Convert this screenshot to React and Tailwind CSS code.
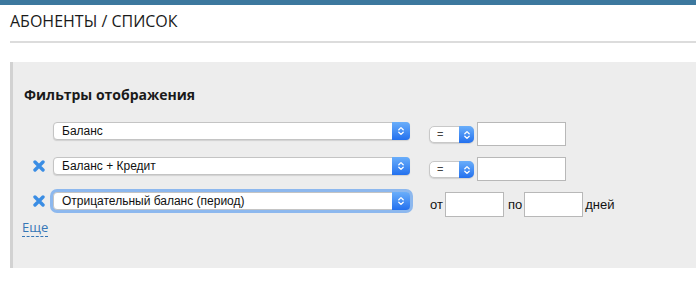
import React from "react";

function Chevrons() {
  return (
    <svg width="8" height="12" viewBox="0 0 8 12" fill="none">
      <path d="M1.8 4.8 L4 2.6 L6.2 4.8" stroke="white" strokeWidth="1.3" strokeLinecap="round" strokeLinejoin="round" />
      <path d="M1.8 7.2 L4 9.4 L6.2 7.2" stroke="white" strokeWidth="1.3" strokeLinecap="round" strokeLinejoin="round" />
    </svg>
  );
}

function BigSelect({ label, focused }) {
  return (
    <div
      className={
        "flex h-[18px] w-[357px] items-stretch rounded-[4px] border border-[#c4c4c4] bg-white shadow-[0_1px_1px_rgba(0,0,0,0.12)] " +
        (focused ? "ring-[3px] ring-[#8db8ee]" : "")
      }
    >
      <div className="flex flex-1 items-center pl-[8px] text-[12px] leading-none text-[#111] [font-family:'Liberation_Sans',Arial,sans-serif]">
        {label}
      </div>
      <div className="-my-px -mr-px flex w-[18px] items-center justify-center rounded-r-[4px] bg-gradient-to-b from-[#6aaefa] to-[#2370ee]">
        <Chevrons />
      </div>
    </div>
  );
}

function SmallSelect() {
  return (
    <div className="mt-[4px] flex h-[17px] w-[45px] items-stretch rounded-[5px] border border-[#c8c8c8] bg-white shadow-[0_1px_1px_rgba(0,0,0,0.12)]">
      <div className="flex flex-1 items-center pl-[7px] text-[11px] leading-none text-[#444] [font-family:'Liberation_Sans',Arial,sans-serif]">
        =
      </div>
      <div className="-my-px -mr-px flex w-[15px] items-center justify-center rounded-r-[5px] bg-gradient-to-b from-[#6aaefa] to-[#2370ee]">
        <Chevrons />
      </div>
    </div>
  );
}

function XIcon() {
  return (
    <svg width="12" height="12" viewBox="0 0 12 12" className="mt-[3px]">
      <path d="M2 2 L10 10 M10 2 L2 10" stroke="#3a8de4" strokeWidth="3.4" strokeLinecap="round" />
    </svg>
  );
}

export default function App() {
  return (
    <div className="min-h-[282px] bg-white [font-family:'Open_Sans',sans-serif]">
      <div className="h-[5px] bg-[#3c789e]" />
      <div className="pl-[10px]">
        <div className="mt-[4px] text-[16px] leading-[24px] text-[#1a1a1a]">АБОНЕНТЫ / СПИСОК</div>
        <div className="mt-[8px] h-[2px] bg-[#dcdcdc]" />
        <div className="mt-[19px] h-[206px] border-l-[3px] border-[#d2d2d2] bg-[#ededed] pt-[23px] pl-[11px]">
          <div className="text-[14px] font-bold leading-[20px] text-[#1a1a1a]">Фильтры отображения</div>
          <div className="mt-[17px] flex flex-col gap-[11px] pl-[9px]">
            <div className="flex h-[24px] items-start">
              <div className="w-[12px]" />
              <div className="ml-[8px]">
                <BigSelect label="Баланс" />
              </div>
              <div className="ml-[19px]">
                <SmallSelect />
              </div>
              <div className="ml-[3px] h-[24px] w-[89px] border border-[#b8b8b8] bg-white" />
            </div>
            <div className="flex h-[24px] items-start">
              <XIcon />
              <div className="ml-[8px]">
                <BigSelect label="Баланс + Кредит" />
              </div>
              <div className="ml-[19px]">
                <SmallSelect />
              </div>
              <div className="ml-[3px] h-[24px] w-[89px] border border-[#b8b8b8] bg-white" />
            </div>
            <div className="flex h-[25px] items-start">
              <XIcon />
              <div className="ml-[8px]">
                <BigSelect label="Отрицательный баланс (период)" focused />
              </div>
              <div className="ml-[20px] flex h-[25px] items-center text-[13px] text-[#111] [font-family:'Liberation_Sans',Arial,sans-serif]">
                <span>от</span>
                <div className="ml-[2px] h-[25px] w-[59px] border border-[#b8b8b8] bg-white" />
                <span className="ml-[4px]">по</span>
                <div className="ml-[2px] h-[25px] w-[59px] border border-[#b8b8b8] bg-white" />
                <span className="ml-[2px]">дней</span>
              </div>
            </div>
          </div>
          <div className="mt-[1px] text-[13px] leading-[18px]">
            <a className="-ml-[2px] border-b border-dashed border-[#3576b6] text-[#3576b6]">Еще</a>
          </div>
        </div>
      </div>
    </div>
  );
}
